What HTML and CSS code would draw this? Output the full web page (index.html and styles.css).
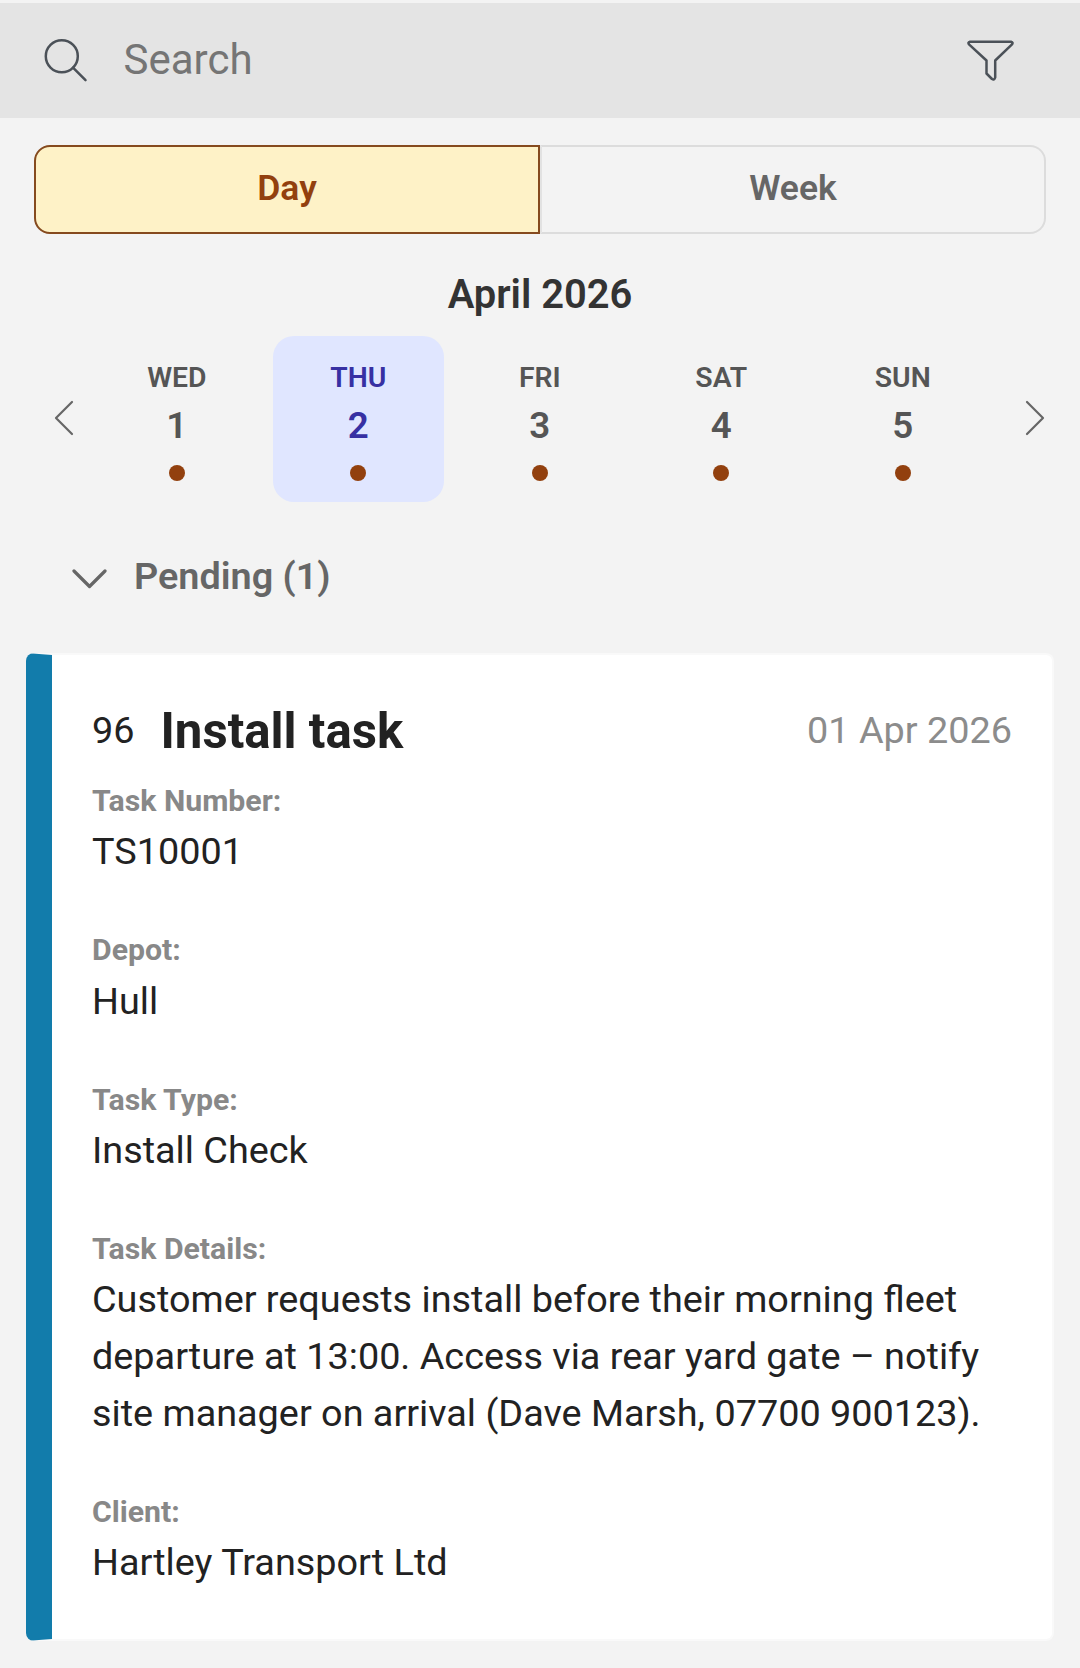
FILE: index.html
```html
<!DOCTYPE html>
<html lang="en">

<head>
    <meta charset="UTF-8">
    <meta name="viewport" content="width=device-width, initial-scale=1.0">
    <title>Tasks</title>
    <link rel="stylesheet" href="styles.css">
</head>

<body>
    <header class="search-bar">
        <svg class="icon" width="48" height="48" viewBox="0 0 48 48">
            <circle cx="19.8" cy="19.3" r="16" />
            <path d="M31 30.700L43.500 43.200" />
        </svg>
        <input class="search-input" type="text" placeholder="Search">
        <svg class="icon" width="48" height="48" viewBox="0 0 48 48">
            <path d="M3 4.700H44Q46.500 5.400 45 7.400L28.200 23.500V40.500Q27.300 43.400 25 42L19.500 36.500V23.500L2 7.400Q.5 5.400 3 4.700Z" />
        </svg>
    </header>

    <div class="view-toggle">
        <button class="toggle active">Day</button>
        <button class="toggle">Week</button>
    </div>

    <h2 class="month">April 2026</h2>

    <div class="date-strip">
        <svg class="arrow" width="20" height="36" viewBox="0 0 20 36">
            <path d="M18 2L2 18L18 34" />
        </svg>
        <div class="days">
            <div class="day">
                <span class="day-name">WED</span>
                <span class="day-number">1</span>
                <span class="dot"></span>
            </div>
            <div class="day selected">
                <span class="day-name">THU</span>
                <span class="day-number">2</span>
                <span class="dot"></span>
            </div>
            <div class="day">
                <span class="day-name">FRI</span>
                <span class="day-number">3</span>
                <span class="dot"></span>
            </div>
            <div class="day">
                <span class="day-name">SAT</span>
                <span class="day-number">4</span>
                <span class="dot"></span>
            </div>
            <div class="day">
                <span class="day-name">SUN</span>
                <span class="day-number">5</span>
                <span class="dot"></span>
            </div>
        </div>
        <svg class="arrow" width="20" height="36" viewBox="0 0 20 36">
            <path d="M2 2L18 18L2 34" />
        </svg>
    </div>

    <div class="group-header">
        <svg class="chevron" width="36" height="22" viewBox="0 0 36 22">
            <path d="M3 3L18.500 18.500L34 3" />
        </svg>
        <span>Pending (1)</span>
    </div>

    <div class="card">
        <div class="card-top">
            <span class="card-id">96</span>
            <h1 class="card-title">Install task</h1>
            <span class="card-date">01 Apr 2026</span>
        </div>
        <div class="field">
            <div class="label">Task Number:</div>
            <div class="value">TS10001</div>
        </div>
        <div class="field">
            <div class="label">Depot:</div>
            <div class="value">Hull</div>
        </div>
        <div class="field">
            <div class="label">Task Type:</div>
            <div class="value">Install Check</div>
        </div>
        <div class="field">
            <div class="label">Task Details:</div>
            <div class="value">Customer requests install before their morning fleet departure at 13:00. Access via rear yard gate – notify site manager on arrival (Dave Marsh, 07700 900123).</div>
        </div>
        <div class="field">
            <div class="label">Client:</div>
            <div class="value">Hartley Transport Ltd</div>
        </div>
    </div>
</body>

</html>
```
FILE: styles.css
```css
* {
    box-sizing: border-box;
}

body {
    margin: 0;
    padding-top: 3px;
    background: #f3f3f3;
    color: #222;
    font-family: Roboto, sans-serif;
    font-size: 37.8px;
}

h1,
h2 {
    margin: 0;
}

svg {
    display: block;
    flex: none;
    fill: none;
    stroke-linecap: round;
    stroke-linejoin: round;
}

/* search */
.search-bar {
    display: flex;
    align-items: center;
    height: 115px;
    padding: 0 65px 0 42px;
    background: #e4e4e4;
}

.icon {
    stroke: #4b5158;
    stroke-width: 2.5;
}

.search-input {
    flex: 1;
    min-width: 0;
    height: 60px;
    margin: 0 0 3px 33.5px;
    padding: 0;
    border: 0;
    background: none;
    font-family: inherit;
    font-size: 42px;
}

.search-input::placeholder {
    color: #757575;
}

/* day / week */
.view-toggle {
    display: flex;
    height: 89px;
    margin: 27px 34px 0;
}

.toggle {
    flex: 1;
    padding: 0 0 4px;
    border: 2px solid #dcdcdc;
    border-left: 2px solid #e2e2e2;
    border-radius: 0 16px 16px 0;
    background: none;
    color: #666;
    font-family: inherit;
    font-size: 35.5px;
    font-weight: 600;
}

.toggle.active {
    border: 2px solid #854a1e;
    border-radius: 16px 0 0 16px;
    background: #fef2c7;
    color: #92400e;
}

.month {
    margin-top: 35px;
    color: #333;
    font-size: 39.9px;
    font-weight: 600;
    line-height: 52px;
    text-align: center;
}

/* date picker */
.date-strip {
    display: flex;
    align-items: center;
    margin-top: 15px;
    padding: 0 35.5px 0 54px;
}

.arrow {
    margin-bottom: 2px;
    stroke: #666;
    stroke-width: 2.2;
}

.days {
    display: flex;
    gap: 10.5px;
    width: 897px;
    margin: 0 auto 0 17.3px;
}

.day {
    display: flex;
    flex: 1;
    flex-direction: column;
    align-items: center;
    height: 166px;
    padding-top: 22px;
    border-radius: 21px;
    color: #555;
    font-weight: 600;
}

.day.selected {
    background: #e0e6ff;
    color: #3730a3;
}

.day-name {
    font-size: 28.35px;
    line-height: 40px;
}

.day-number {
    margin-top: 3px;
    font-size: 36.75px;
    line-height: 50px;
}

.dot {
    width: 16px;
    height: 16px;
    margin-top: 14px;
    border-radius: 50%;
    background: #92400e;
}

/* task list */
.group-header {
    display: flex;
    align-items: center;
    gap: 27px;
    margin-top: 48px;
    padding-left: 71px;
    color: #666;
    font-weight: 600;
    line-height: 52px;
}

.chevron {
    margin-top: 6px;
    stroke: #666;
    stroke-width: 3.2;
}

.card {
    margin: 51px 26px 0;
    padding: 36px 40px 1px;
    border: 2px solid #f9f9f9;
    border-left: 26px solid #127cab;
    border-radius: 8px;
    background: #fff;
}

.card-top {
    display: flex;
    align-items: center;
    height: 80px;
    margin-bottom: 7.1px;
}

.card-id,
.card-date {
    margin-bottom: 2px;
}

.card-title {
    margin-left: 26px;
    font-size: 49.14px;
    font-weight: 700;
}

.card-date {
    margin-left: auto;
    color: #8c8c8c;
}

.field {
    margin-bottom: 47.25px;
}

.label {
    color: #888;
    font-size: 30.24px;
    font-weight: 700;
    line-height: 1.5;
}

.value {
    line-height: 1.5;
}
```
